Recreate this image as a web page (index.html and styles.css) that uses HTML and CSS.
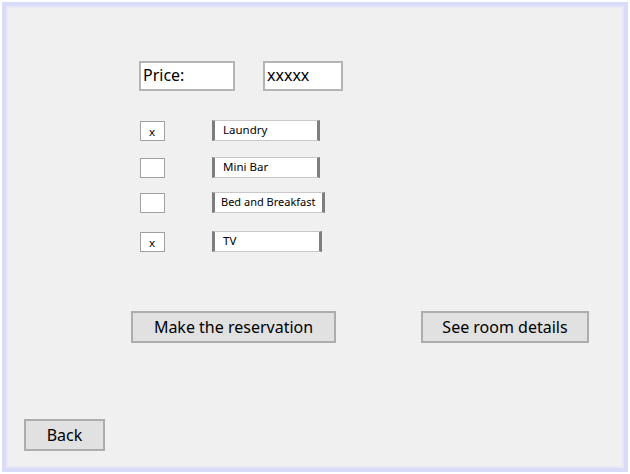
FILE: index.html
```html
<!DOCTYPE html>
<html>
<head>
<meta charset="utf-8">
<link rel="stylesheet" href="styles.css">
</head>
<body>
<div class="frame">
  <div class="price-row">
    <div class="field field-price">Price:</div>
    <div class="field field-value">xxxxx</div>
  </div>
  <div class="options">
    <div class="option">
      <div class="check">x</div>
      <div class="label w108">Laundry</div>
    </div>
    <div class="option">
      <div class="check"></div>
      <div class="label w108">Mini Bar</div>
    </div>
    <div class="option up2">
      <div class="check"></div>
      <div class="label w113 tight">Bed and Breakfast</div>
    </div>
    <div class="option down2">
      <div class="check">x</div>
      <div class="label w110">TV</div>
    </div>
  </div>
  <div class="actions">
    <button class="btn btn-reserve">Make the reservation</button>
    <button class="btn btn-details">See room details</button>
  </div>
  <div class="footer">
    <button class="btn btn-back">Back</button>
  </div>
</div>
</body>
</html>
```
FILE: styles.css
```css
html, body {
  margin: 0;
  padding: 0;
  background: #ffffff;
}
body {
  font-family: "Noto Sans", "Open Sans", sans-serif;
  color: #000;
}
.frame {
  margin: 2px;
  width: 626px;
  height: 470px;
  box-sizing: border-box;
  border: 4px solid #dadaf9;
  box-shadow: inset 0 0 0 2px #e7e7f6;
  background: #f0f0f0;
  display: flex;
  flex-direction: column;
  padding: 55px 0 17px 0;
}
.price-row {
  display: flex;
  gap: 28px;
  margin-left: 133px;
}
.field {
  box-sizing: border-box;
  height: 30px;
  background: #fff;
  border: 2px solid #b4b4b4;
  font-size: 16px;
  line-height: 25px;
  padding-left: 2px;
}
.field-price { width: 96px; }
.field-value { width: 80px; }
.options {
  margin-left: 133px;
  margin-top: 29px;
  display: flex;
  flex-direction: column;
  gap: 16px;
}
.option {
  display: flex;
  align-items: flex-start;
}
.option.up2 { margin-top: -2px; }
.option.down2 { margin-top: 2px; }
.check {
  box-sizing: border-box;
  width: 25px;
  height: 20px;
  margin-top: 1px;
  margin-left: 1px;
  margin-right: 47px;
  background: #fff;
  border: 1px solid #a0a0a0;
  font-size: 11.5px;
  line-height: 19px;
  padding-left: 8px;
}
.label {
  box-sizing: border-box;
  height: 21px;
  background: #fff;
  border-top: 1px solid #c8c8c8;
  border-bottom: 1px solid #c8c8c8;
  border-left: 3px solid #7e7e7e;
  border-right: 3px solid #7e7e7e;
  font-size: 11.5px;
  line-height: 18px;
  padding-left: 8px;
  white-space: nowrap;
}
.label.tight { padding-left: 6px; font-size: 11px; }
.w108 { width: 108px; }
.w110 { width: 110px; }
.w113 { width: 113px; }
.actions {
  display: flex;
  gap: 85px;
  margin-left: 125px;
  margin-top: 59px;
}
.btn {
  box-sizing: border-box;
  height: 32px;
  background: #e1e1e1;
  border: 2px solid #adadad;
  font-family: "Noto Sans", "Open Sans", sans-serif;
  font-size: 16px;
  color: #000;
  padding: 0;
  margin: 0;
  text-align: center;
  line-height: 26px;
}
.btn-reserve { width: 205px; }
.btn-details { width: 168px; }
.footer {
  margin-top: auto;
  padding-left: 18px;
}
.btn-back { width: 81px; }
```
